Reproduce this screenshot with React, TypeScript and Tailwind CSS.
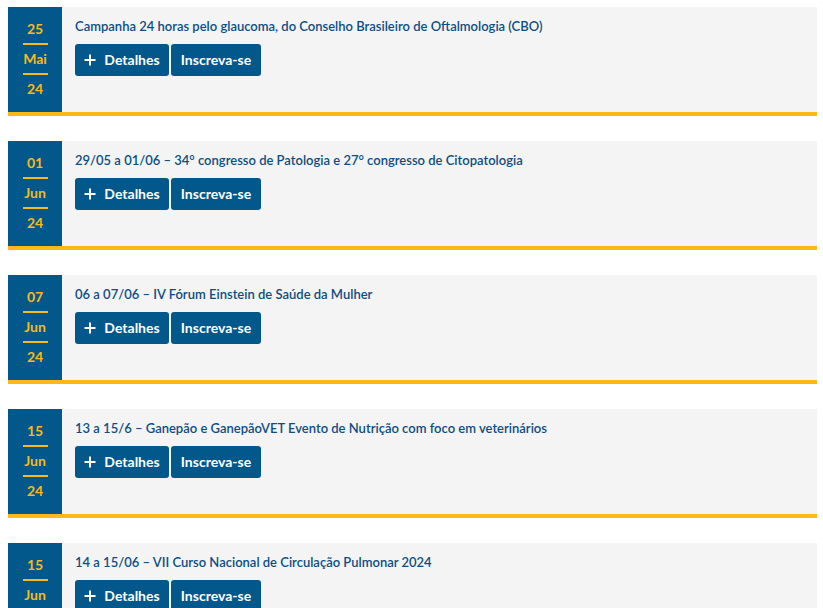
const EVENTS = [
  { day: '25', month: 'Mai', year: '24', title: 'Campanha 24 horas pelo glaucoma, do Conselho Brasileiro de Oftalmologia (CBO)' },
  { day: '01', month: 'Jun', year: '24', title: '29/05 a 01/06 – 34° congresso de Patologia e 27° congresso de Citopatologia' },
  { day: '07', month: 'Jun', year: '24', title: '06 a 07/06 – IV Fórum Einstein de Saúde da Mulher' },
  { day: '15', month: 'Jun', year: '24', title: '13 a 15/6 – Ganepão e GanepãoVET Evento de Nutrição com foco em veterinários' },
  { day: '15', month: 'Jun', year: '24', title: '14 a 15/06 – VII Curso Nacional de Circulação Pulmonar 2024' },
]

export default function App() {
  return (
    <div className="pl-2 pr-[6px] pt-[7px] space-y-[25px] bg-white h-[608px] overflow-hidden" style={{ fontFamily: 'Lato, "Noto Sans", sans-serif' }}>
      {EVENTS.map((e, i) => (
        <div key={i} className="flex h-[109px] bg-[#f4f4f4] border-b-4 border-[#fbb817]">
          {/* date column */}
          <div className="w-[54px] shrink-0 bg-[#02578b] flex flex-col items-center pt-[14px] text-[14px] font-bold text-[#fbb817] leading-[16px]">
            <span>{e.day}</span>
            <span className="w-[25px] h-[2px] bg-[#fbb817] my-[6px]" />
            <span>{e.month}</span>
            <span className="w-[25px] h-[2px] bg-[#fbb817] my-[6px]" />
            <span>{e.year}</span>
          </div>
          <div className="pl-[13px] pt-[10px]">
            <p className="text-[13px] font-semibold text-[#0c4e84] leading-[18px]">{e.title}</p>
            <div className="flex gap-[2px] mt-[9px]">
              <button className="w-[94px] h-[32px] pb-px rounded-[3px] bg-[#02578b] text-white text-[14px] font-bold flex items-center justify-center gap-[8px]">
                <svg width="12" height="12" viewBox="0 0 12 12"><path d="M6 0.5v11M0.5 6h11" stroke="white" strokeWidth="2" /></svg>
                Detalhes
              </button>
              <button className="w-[90px] h-[32px] pb-px rounded-[3px] bg-[#02578b] text-white text-[14px] font-bold">
                Inscreva-se
              </button>
            </div>
          </div>
        </div>
      ))}
    </div>
  )
}
